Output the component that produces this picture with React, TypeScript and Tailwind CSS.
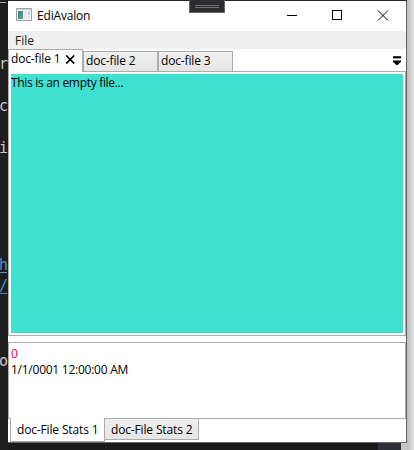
import React from "react";

const uiFont = "font-['Open_Sans','Noto_Sans',sans-serif] text-[12px] leading-4 whitespace-pre";

function EditorBackdrop() {
  const glyph = "absolute right-0 h-5 leading-5";
  return (
    <div className="w-2 h-[450px] shrink-0 relative overflow-hidden bg-[#1e1e1e] text-[#c8c8c8] font-['DejaVu_Sans_Mono',monospace] text-[15px]">
      <div className="absolute left-0 top-[2px] w-[6px] h-px bg-[#aaa]" />
      <span className={`${glyph} top-[54px]`}>r</span>
      <span className={`${glyph} top-[96px]`}>c</span>
      <span className={`${glyph} top-[138px]`}>i</span>
      <span className={`${glyph} top-[255px] text-[#4b91cf]`}>h</span>
      <div className="absolute left-0 top-[272px] w-[7px] h-px bg-[#4b91cf]" />
      <span className={`${glyph} top-[276px] text-[#4b91cf]`}>/</span>
      <div className="absolute left-0 top-[293px] w-[7px] h-px bg-[#4b91cf]" />
      <span className={`${glyph} top-[351px]`}>o</span>
    </div>
  );
}

function AppIcon() {
  return (
    <svg width="16" height="14" viewBox="0 0 16 14" shapeRendering="crispEdges">
      <defs>
        <linearGradient id="appTile" x1="0" y1="0" x2="1" y2="1">
          <stop offset="0" stopColor="#4874a8" />
          <stop offset="1" stopColor="#58b078" />
        </linearGradient>
      </defs>
      <rect x="0.5" y="0.5" width="15" height="12" fill="#f2f2f2" stroke="#a0a3a8" />
      <rect x="1" y="1" width="14" height="1" fill="#c9ced5" />
      <rect x="2" y="3" width="5" height="8" fill="url(#appTile)" />
      <rect x="8" y="3" width="3" height="8" fill="#e6e9eb" />
      <rect x="12" y="3" width="2" height="4" fill="#c8cdd0" />
      <rect x="12" y="8" width="2" height="3" fill="#e2e4e5" />
    </svg>
  );
}

function TitleBar() {
  return (
    <div className="h-[30px] shrink-0 flex items-center bg-white">
      <div className="ml-2 mt-[-2px]"><AppIcon /></div>
      <span className={`${uiFont} ml-[5px] tracking-[-0.18px]`}>EdiAvalon</span>
      <svg className="ml-auto" width="138" height="30" viewBox="0 0 138 30" fill="none" stroke="#000">
        <path d="M19 14.5h10M64.5 9.5h9v9h-9z" shapeRendering="crispEdges" />
        <path d="M110 9.5l10 10M120 9.5l-10 10" />
      </svg>
    </div>
  );
}

function DocumentTabs() {
  const idle = "h-[20px] w-[75px] border border-b-0 border-[#acacac] bg-gradient-to-b from-[#f0f0f0] to-[#e5e5e5] pl-[2px] pt-px";
  return (
    <div className="h-[23px] shrink-0 flex items-end border-b border-[#acacac]">
      <div className="h-[23px] w-[75px] mb-[-1px] shrink-0 relative bg-white border border-b-0 border-[#acacac] flex pl-[2px] pt-px">
        <span className={`${uiFont} tracking-[-0.15px]`}>doc-file 1</span>
        <svg className="absolute left-[56px] top-[5px]" width="11" height="9" viewBox="0 0 11 9" fill="none" stroke="#000" strokeWidth="1.7">
          <path d="M1.2.5l8 8M9.2.5l-8 8" />
        </svg>
      </div>
      <div className={idle}><span className={`${uiFont} block tracking-[-0.15px]`}>doc-file 2</span></div>
      <div className={idle}><span className={`${uiFont} block tracking-[-0.15px]`}>doc-file 3</span></div>
      <svg className="ml-auto mr-[5px] mb-[5px]" width="8" height="10" viewBox="0 0 8 10">
        <path d="M0 .2h8v2H0z" />
        <path d="M0 2.2h8v.8H0z" fill="#999" />
        <path d="M0 4.4h8v1.4L4.6 9H3.4L0 5.8z" />
      </svg>
    </div>
  );
}

function StatsTabs() {
  return (
    <div className="h-[24px] shrink-0 flex items-start pl-[2px]">
      <div className="h-[24px] w-[95px] mt-[-1px] shrink-0 relative bg-white border border-t-0 border-[#acacac] pl-[6px] pt-[4px]">
        <span className={`${uiFont} block tracking-[-0.15px]`}>doc-File Stats 1</span>
      </div>
      <div className="h-[22px] w-[95px] mt-[-1px] ml-[-1px] border border-[#acacac] bg-gradient-to-b from-[#f0f0f0] to-[#e5e5e5] pl-[6px] pt-[3px]">
        <span className={`${uiFont} block tracking-[-0.15px]`}>doc-File Stats 2</span>
      </div>
    </div>
  );
}

export default function App() {
  return (
    <div className="w-[414px] h-[450px] overflow-hidden relative flex bg-[#1e1e1e] text-black">
      <EditorBackdrop />
      <div className="w-[399px] h-[450px] shrink-0 flex flex-col">
        <div className="h-px shrink-0 bg-[#28252b]" />
        <div className="h-[442px] shrink-0 flex flex-col bg-white border-r border-b border-[#666]">
          <TitleBar />
          <div className="h-[18px] shrink-0 bg-[#efefef] pl-[7px] pt-[2px]">
            <span className={`${uiFont} block text-[#212121]`}>File</span>
          </div>
          <DocumentTabs />
          <div className="h-[264px] shrink-0 border border-t-0 border-[#acacac] p-[2px]">
            <div className="h-[259px] bg-[#40e0d0] pt-px">
              <span className={`${uiFont} block tracking-[-0.31px]`}>This is an empty file...</span>
            </div>
          </div>
          <div className="h-[77px] mt-[6px] shrink-0 border border-[#acacac] pl-[2px] pt-[3px]">
            <span className={`${uiFont} block text-[#f00050]`}>0</span>
            <span className={`${uiFont} block tracking-[-0.25px]`}>1/1/0001 12:00:00 AM</span>
          </div>
          <StatsTabs />
        </div>
        <div className="h-[7px] flex justify-end bg-[#1a1a1a]">
          <div className="w-[23px] bg-[#303038]" />
          <div className="w-[6px] bg-[#c8c8c8]" />
        </div>
      </div>
      <div className="w-[7px] h-[450px] bg-gradient-to-r from-[#bcbcbc] to-[#e2e2e2]" />
      <div className="absolute left-[189px] top-0 w-9 h-[13px] bg-[#2d2d30] border border-[#68686a] border-t-0 flex flex-col items-center pt-[5px] gap-px">
        <div className="w-6 h-px bg-[#707072]" />
        <div className="w-6 h-px bg-[#707072]" />
      </div>
    </div>
  );
}
